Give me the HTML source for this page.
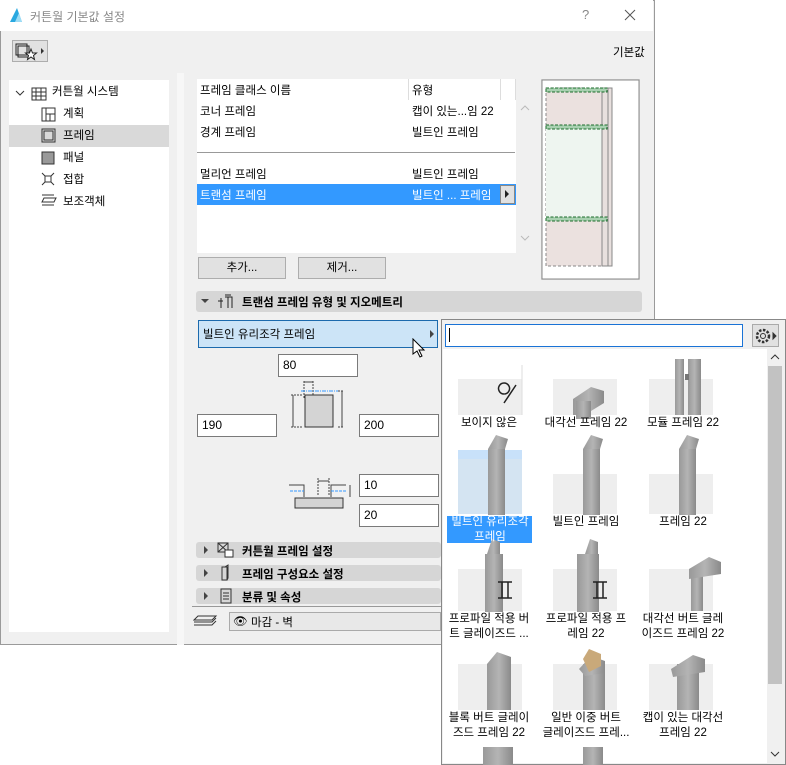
<!DOCTYPE html>
<html><head><meta charset="utf-8"><style>
*{box-sizing:border-box;margin:0;padding:0}
body{width:786px;height:765px;background:#fff;position:relative;overflow:hidden;font-family:"Liberation Sans","Noto Sans CJK KR",sans-serif;font-size:11.5px;color:#000}
.a{position:absolute}
.dlg{left:0;top:0;width:655px;height:645px;background:#f0f0f0;border:1px solid #9a9a9a}
.title{left:0;top:0;width:653px;height:31px;background:#fff}
.inp{position:absolute;background:#fff;border:1px solid #7a7a7a;padding:3px 4px;font-size:12px}
.btn{position:absolute;background:#e1e1e1;border:1px solid #adadad;text-align:center;line-height:20px}
.sec{position:absolute;background:#d6d6d6;border-radius:3px;font-weight:bold;font-size:11.5px}
.tri{position:absolute;width:0;height:0;border-top:4px solid transparent;border-bottom:4px solid transparent;border-left:4px solid #444}
.lbl{position:absolute;width:96px;text-align:center;font-size:11.5px;line-height:15px}
</style></head><body>
<div class="a dlg"></div>
<div class="a title"></div>
<svg class="a" style="left:9px;top:7px" width="14" height="16"><path d="M1 15 L8 1 L13 15 Z" fill="#29a8e0"/><path d="M6 15 L10 6 L13 15Z" fill="#9ddcf5"/></svg>
<div class="a" style="left:30px;top:8px;color:#888;font-size:12px">커튼월 기본값 설정</div>
<div class="a" style="left:582px;top:7px;color:#888;font-size:13px">?</div>
<svg class="a" style="left:624px;top:9px" width="12" height="12"><path d="M1 1L11 11M11 1L1 11" stroke="#555" stroke-width="1"/></svg>
<div class="a" style="left:12px;top:40px;width:36px;height:22px;background:#e1e1e1;border:1px solid #adadad"></div>
<svg class="a" style="left:15px;top:42px" width="32" height="20"><rect x="1" y="2" width="11" height="11" fill="none" stroke="#222"/><rect x="3" y="4" width="11" height="11" fill="none" stroke="#222"/><path d="M16 7l1.5 4h4l-3 2.5 1 4-3.5-2.5-3.5 2.5 1-4-3-2.5h4z" fill="#fff" stroke="#222"/><path d="M26 6l3 3-3 3z" fill="#333"/></svg>
<div class="a" style="left:613px;top:44px">기본값</div>
<div class="a" style="left:9px;top:80px;width:160px;height:552px;background:#fff"></div>
<div class="a" style="left:9px;top:125px;width:160px;height:22px;background:#d9d9d9"></div>
<svg class="a" style="left:14px;top:85px" width="150" height="125" stroke="#333" fill="none">
<path d="M2 6l4 4 4-4"/>
<path d="M18 3h14v12h-14zM18 7h14M18 11h14M22 3v12M27 3v12"/>
<rect x="28" y="23" width="13" height="13"/><path d="M32 23v13M32 29h9M36 29v7"/>
<rect x="28" y="44" width="13" height="13"/><rect x="30" y="46" width="9" height="9"/>
<rect x="28" y="67" width="12" height="12" fill="#999"/>
<path d="M28 88l12 12M40 88l-12 12"/><rect x="31" y="91" width="6" height="6" fill="#fff"/>
<path d="M28 110h12M30 113h12l-2 4h-12zM28 120h12"/>
</svg>
<div class="a" style="left:52px;top:83px">커튼월 시스템</div>
<div class="a" style="left:63px;top:105px">계획</div>
<div class="a" style="left:63px;top:127px">프레임</div>
<div class="a" style="left:63px;top:149px">패널</div>
<div class="a" style="left:63px;top:171px">접합</div>
<div class="a" style="left:63px;top:193px">보조객체</div>
<div class="a" style="left:177px;top:73px;width:7px;height:572px;background:#f7f7f7"></div>
<div class="a" style="left:197px;top:79px;width:319px;height:174px;background:#fff"></div>
<div class="a" style="left:408px;top:79px;width:1px;height:21px;background:#ddd"></div>
<div class="a" style="left:500px;top:79px;width:1px;height:21px;background:#ddd"></div>
<div class="a" style="left:515px;top:79px;width:1px;height:21px;background:#ddd"></div>
<div class="a" style="left:197px;top:152px;width:318px;height:1px;background:#999"></div>
<div class="a" style="left:197px;top:184px;width:319px;height:21px;background:#3399ff"></div>
<div class="a" style="left:500px;top:185px;width:15px;height:19px;background:#e1e1e1;border:1px solid #888"></div>
<div class="tri" style="left:505px;top:190px;border-left-color:#222"></div>
<div class="a" style="left:200px;top:82px">프레임 클래스 이름</div><div class="a" style="left:412px;top:82px">유형</div>
<div class="a" style="left:200px;top:103px">코너 프레임</div><div class="a" style="left:412px;top:103px">캡이 있는...임 22</div>
<div class="a" style="left:200px;top:124px">경계 프레임</div><div class="a" style="left:412px;top:124px">빌트인 프레임</div>
<div class="a" style="left:200px;top:166px">멀리언 프레임</div><div class="a" style="left:412px;top:166px">빌트인 프레임</div>
<div class="a" style="left:200px;top:187px;color:#fff">트랜섬 프레임</div><div class="a" style="left:412px;top:187px;color:#fff">빌트인 ... 프레임</div>
<svg class="a" style="left:520px;top:104px" width="10" height="140" fill="none" stroke="#bbb"><path d="M1 6l4-4 4 4M1 132l4 4 4-4"/></svg>
<div class="a" style="left:541px;top:79px;width:99px;height:201px;background:#fff;border:1px solid #ddd"></div>
<svg class="a" style="left:541px;top:79px" width="100" height="202">
<rect x="1" y="1" width="97" height="199" fill="none" stroke="#888"/>
<rect x="5" y="9" width="66" height="178" fill="#ebe1df" stroke="#888" stroke-dasharray="3,2"/>
<rect x="5" y="50" width="61" height="89" fill="#eef5f0"/>
<rect x="61" y="9" width="6" height="178" fill="#e8e0de" stroke="#888"/>
<rect x="67" y="9" width="4" height="178" fill="#e8e0de" stroke="#888"/>
<g fill="#a8d0b0" stroke="#1a6b2a" stroke-dasharray="3,1.5"><rect x="5" y="9" width="61" height="4"/><rect x="5" y="46" width="61" height="4"/><rect x="5" y="138" width="61" height="4"/></g>
</svg>
<div class="btn" style="left:198px;top:257px;width:88px;height:22px">추가...</div>
<div class="btn" style="left:298px;top:257px;width:88px;height:22px">제거...</div>
<div class="sec" style="left:196px;top:291px;width:446px;height:21px"></div>
<div class="a" style="left:201px;top:299px;border-left:4px solid transparent;border-right:4px solid transparent;border-top:4px solid #444"></div>
<svg class="a" style="left:216px;top:293px" width="18" height="16" stroke="#222" fill="none"><path d="M2 8h5M5 5v10M9 4h7v11M12 4v11M9 2l6 0"/></svg>
<div class="a" style="left:242px;top:294px;font-weight:bold">트랜섬 프레임 유형 및 지오메트리</div>
<div class="a" style="left:198px;top:320px;width:240px;height:28px;background:#cce4f7;border:1px solid #1c6aad"></div>
<div class="a" style="left:203px;top:326px">빌트인 유리조각 프레임</div>
<div class="tri" style="left:430px;top:330px"></div>
<svg class="a" style="left:412px;top:338px" width="16" height="22"><path d="M1 1v15l4-3 3 6 2-1-3-6h5z" fill="#fff" stroke="#000"/></svg>
<div class="inp" style="left:278px;top:354px;width:80px;height:23px">80</div>
<div class="inp" style="left:197px;top:414px;width:80px;height:23px">190</div>
<div class="inp" style="left:359px;top:414px;width:80px;height:23px">200</div>
<div class="inp" style="left:359px;top:474px;width:80px;height:23px">10</div>
<div class="inp" style="left:359px;top:504px;width:80px;height:23px">20</div>
<svg class="a" style="left:285px;top:378px" width="80" height="140" fill="none" stroke="#444" stroke-width="1">
<path d="M19 3v17M28 3v17" stroke-dasharray="2,1"/><path d="M19 4h9"/>
<path d="M16 13h39" stroke="#39f" stroke-dasharray="4,1,1,1"/>
<rect x="20" y="17" width="28" height="32" fill="#d4d4d4" stroke="#333"/>
<path d="M8 17v32M57 13v36"/><path d="M6 17h12M6 49h12M53 13h6M53 49h6" stroke-dasharray="2,1"/>
<path d="M33 100v18M44 100v18" stroke-dasharray="2,1"/><path d="M33 103h11"/>
<path d="M4 107h15v12M46 119v-12h15" stroke="#444"/>
<path d="M5 113h14M46 113h15" stroke="#39f" stroke-dasharray="3,1"/>
<rect x="10" y="120" width="48" height="10" fill="#d4d4d4" stroke="#333"/>
<path d="M65 107v12"/>
</svg>
<div class="sec" style="left:196px;top:542px;width:245px;height:16px"></div>
<div class="sec" style="left:196px;top:565px;width:245px;height:16px"></div>
<div class="sec" style="left:196px;top:588px;width:245px;height:16px"></div>
<div class="tri" style="left:204px;top:546px"></div><div class="tri" style="left:204px;top:569px"></div><div class="tri" style="left:204px;top:592px"></div>
<svg class="a" style="left:216px;top:541px" width="20" height="66" fill="none" stroke="#333"><rect x="2" y="2" width="10" height="9"/><path d="M2 2l10 9M12 2l-10 9"/><rect x="9" y="9" width="8" height="7" fill="#fff"/><rect x="6" y="26" width="5" height="13"/><path d="M9 26l3-2v13l-1 2"/><rect x="5" y="48" width="10" height="14"/><path d="M7 52h6M7 55h6M7 58h6"/></svg>
<div class="a" style="left:242px;top:543px;font-weight:bold">커튼월 프레임 설정</div>
<div class="a" style="left:242px;top:566px;font-weight:bold">프레임 구성요소 설정</div>
<div class="a" style="left:242px;top:589px;font-weight:bold">분류 및 속성</div>
<div class="a" style="left:192px;top:606px;width:250px;height:1px;background:#999"></div>
<svg class="a" style="left:193px;top:614px" width="26" height="14" stroke="#333" fill="none"><path d="M5 2h18l-4 4h-18zM1 8h18l4-4M1 11h18l4-4"/></svg>
<div class="a" style="left:229px;top:612px;width:212px;height:19px;background:#e8e8e8;border:1px solid #aaa"></div>
<div class="a" style="left:233px;top:614px">👁︎</div>
<div class="a" style="left:251px;top:614px">마감 - 벽</div>

<!-- popup -->
<div class="a" style="left:441px;top:319px;width:345px;height:446px;background:#f0f0f0;border:1px solid #888"></div>
<div class="a" style="left:445px;top:324px;width:298px;height:23px;background:#fff;border:1px solid #1a73d6"></div>
<div class="a" style="left:449px;top:328px;width:1px;height:14px;background:#000"></div>
<div class="a" style="left:752px;top:324px;width:27px;height:23px;background:#e1e1e1;border:1px solid #aaa"></div>
<svg class="a" style="left:754px;top:326px" width="24" height="20" fill="none" stroke="#333"><circle cx="9" cy="10" r="6" stroke-dasharray="2.5,1.5" stroke-width="2.5"/><circle cx="9" cy="10" r="2.5"/><path d="M19 7l3 3-3 3z" fill="#333"/></svg>
<div class="a" style="left:443px;top:349px;width:324px;height:414px;background:#fff"></div>
<div class="a" style="left:767px;top:349px;width:16px;height:414px;background:#f0f0f0"></div>
<div class="a" style="left:768px;top:366px;width:14px;height:318px;background:#c2c2c2"></div>
<svg class="a" style="left:770px;top:352px" width="10" height="408" fill="none" stroke="#333"><path d="M1 7l4-4 4 4M1 400l4 4 4-4"/></svg>
<div class="a" style="left:458px;top:450px;width:64px;height:64px;background:#c8e1fa"></div>
<div class="a" style="left:447px;top:516px;width:85px;height:27px;background:#3399ff"></div>

<svg class="a" style="left:443px;top:349px" width="324" height="416">
<defs><linearGradient id="g" x1="0" x2="1"><stop offset="0" stop-color="#999"/><stop offset=".5" stop-color="#b4b4b4"/><stop offset="1" stop-color="#8a8a8a"/></linearGradient></defs>
<g fill="#eeeeee"><rect x="15" y="30" width="64" height="36"/><rect x="110" y="30" width="64" height="36"/><rect x="206" y="30" width="64" height="36"/>
<rect x="15" y="110" width="64" height="55" fill="#d4e4f2"/><rect x="110" y="125" width="64" height="40"/><rect x="206" y="125" width="64" height="40"/>
<rect x="15" y="220" width="64" height="42"/><rect x="110" y="220" width="64" height="42"/><rect x="206" y="220" width="64" height="42"/>
<rect x="15" y="315" width="64" height="46"/><rect x="110" y="315" width="64" height="46"/><rect x="206" y="315" width="64" height="46"/></g>
<path d="M79 16v50" stroke="#ddd"/>
<path d="M73 36l-12 18 M61 45a5.5 5.5 0 1 1 0.1 0" stroke="#222" fill="none" stroke-width="1.5"/>
<g fill="url(#g)">
<path d="M130 50l18-12 13 4v12l-13 8v4h-18z"/><rect x="133" y="52" width="15" height="18"/>
<rect x="245" y="10" width="13" height="56"/><rect x="232" y="10" width="9" height="56"/><path d="M242 25h4v6h-4z" fill="#777"/>
<rect x="45" y="100" width="17" height="66"/><path d="M45 100l8-14 12 4-3 10z"/>
<rect x="140" y="100" width="17" height="66"/><path d="M140 100l8-14 12 4-3 10z"/>
<rect x="236" y="100" width="17" height="66"/><path d="M236 100l8-14 12 4-3 10z"/>
<rect x="42" y="205" width="18" height="58"/><path d="M44 205l5-15 8 3v12z"/>
<rect x="134" y="205" width="22" height="58"/><path d="M142 205l5-15 8 3v12z"/>
<rect x="248" y="220" width="12" height="42"/><path d="M246 220l20-12 12 5v12l-32 5z"/>
<rect x="44" y="315" width="24" height="46"/><path d="M44 315l10-12 14 5v7z"/>
<rect x="140" y="315" width="22" height="46"/><path d="M136 320l12-13 14 5v12l-20 3z"/>
<rect x="234" y="315" width="22" height="46"/><path d="M228 320l22-14 12 4v13l-32 5z"/>
<rect x="40" y="398" width="30" height="20"/><rect x="140" y="398" width="20" height="20"/></g>
<path d="M140 310l6-10 12 5v12l-12 6z" fill="#c9a97a"/>
<g fill="none" stroke="#222" stroke-width="1.5"><path d="M55 233h14M55 249h14M59 233v16M65 233v16"/><path d="M150 233h14M150 249h14M154 233v16M160 233v16"/></g>
</svg>
<div class="lbl" style="left:441px;top:416px">보이지 않은</div>
<div class="lbl" style="left:538px;top:416px">대각선 프레임 22</div>
<div class="lbl" style="left:635px;top:416px">모듈 프레임 22</div>
<div class="lbl" style="left:442px;top:515px;color:#fff">빌트인 유리조각<br>프레임</div>
<div class="lbl" style="left:538px;top:515px">빌트인 프레임</div>
<div class="lbl" style="left:635px;top:515px">프레임 22</div>
<div class="lbl" style="left:441px;top:612px">프로파일 적용 버<br>트 글레이즈드 ...</div>
<div class="lbl" style="left:538px;top:612px">프로파일 적용 프<br>레임 22</div>
<div class="lbl" style="left:635px;top:612px">대각선 버트 글레<br>이즈드 프레임 22</div>
<div class="lbl" style="left:441px;top:711px">블록 버트 글레이<br>즈드 프레임 22</div>
<div class="lbl" style="left:538px;top:711px">일반 이중 버트<br>글레이즈드 프레...</div>
<div class="lbl" style="left:635px;top:711px">캡이 있는 대각선<br>프레임 22</div>
</body></html>
